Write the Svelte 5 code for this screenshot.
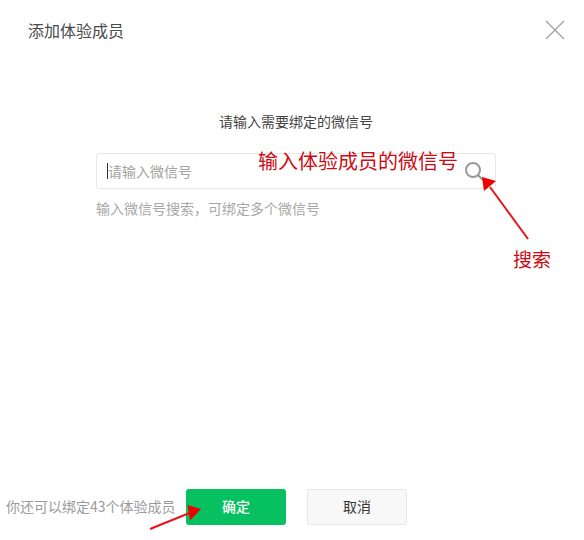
<script>
  const title = '添加体验成员';
</script>

<div class="dialog">
  <header class="head">
    <h2>{title}</h2>
    <button class="close" aria-label="关闭">
      <svg width="20" height="20" viewBox="0 0 20 20"><path d="M1 1L19 19M19 1L1 19" stroke="#a3a3a3" stroke-width="1.4" fill="none"/></svg>
    </button>
  </header>

  <main class="body">
    <p class="prompt">请输入需要绑定的微信号</p>
    <div class="field">
      <span class="caret"></span>
      <span class="placeholder">请输入微信号</span>
      <svg class="search" width="22" height="22" viewBox="0 0 22 22"><circle cx="9" cy="9" r="7" stroke="#9a9a9a" stroke-width="2" fill="none"/><path d="M14 14L19 19" stroke="#9a9a9a" stroke-width="2.2"/></svg>
    </div>
    <p class="hint">输入微信号搜索，可绑定多个微信号</p>
  </main>

  <footer class="foot">
    <span class="quota">你还可以绑定43个体验成员</span>
    <button class="btn primary">确定</button>
    <button class="btn ghost">取消</button>
  </footer>

  <span class="note note-input">输入体验成员的微信号</span>
  <span class="note note-search">搜索</span>
  <svg class="arrows" width="584" height="540" viewBox="0 0 584 540">
    <path d="M528 239L490 187" stroke="#e8131a" stroke-width="2" fill="none"/>
    <path d="M482 177L496 181L484 191Z" fill="#f00000"/>
    <path d="M150 529L192 512" stroke="#e8131a" stroke-width="2" fill="none"/>
    <path d="M201 509L187.500 505L190 520.500Z" fill="#f00000"/>
  </svg>
</div>

<style>
  :global(body) {
    margin: 0;
    background: #fff;
  }
  .dialog {
    position: relative;
    width: 584px;
    height: 540px;
    display: flex;
    flex-direction: column;
    overflow: hidden;
    font-family: "Noto Sans CJK SC", "Liberation Sans", sans-serif;
    color: #353535;
  }
  .head {
    display: flex;
    align-items: center;
    justify-content: space-between;
    height: 24px;
    padding: 18px 19px 0 28px;
  }
  h2 {
    margin: 0;
    font-size: 16px;
    font-weight: 400;
    line-height: 24px;
    color: #4a4a4a;
  }
  .close {
    display: flex;
    padding: 0;
    border: 0;
    background: none;
  }
  .body {
    flex: 1;
    display: flex;
    flex-direction: column;
    padding: 68px 88px 0 96px;
  }
  .prompt {
    margin: 0 0 21px;
    font-size: 14px;
    line-height: 22px;
    text-align: center;
    color: #444;
  }
  .field {
    box-sizing: border-box;
    display: flex;
    align-items: center;
    height: 36px;
    padding: 0 9px 0 10px;
    border: 1px solid #e7e7e7;
    border-radius: 3px;
  }
  .caret {
    width: 1px;
    height: 16px;
    background: #333;
  }
  .placeholder {
    flex: 1;
    font-size: 14px;
    color: #a3a3a3;
  }
  .search {
    margin-top: 2px;
  }
  .hint {
    margin: 8px 0 0;
    font-size: 14px;
    line-height: 22px;
    color: #a8a8a8;
  }
  .foot {
    display: flex;
    align-items: center;
    height: 36px;
    padding: 0 0 15px 6px;
  }
  .quota {
    width: 180px;
    padding-bottom: 2px;
    font-size: 14px;
    color: #9a9a9a;
    white-space: nowrap;
  }
  .btn {
    box-sizing: border-box;
    width: 100px;
    height: 36px;
    padding: 0 0 2px;
    border-radius: 3px;
    font: inherit;
    font-size: 14px;
  }
  .primary {
    border: 0;
    background: #07c160;
    color: #fff;
    font-weight: 500;
  }
  .ghost {
    margin-left: 21px;
    border: 1px solid #e6e6e6;
    background: #f8f8f8;
    color: #353535;
  }
  .note {
    position: absolute;
    font-size: 20px;
    line-height: 24px;
    color: #cc0b14;
    white-space: nowrap;
  }
  .note-input {
    left: 258px;
    top: 149px;
  }
  .note-search {
    left: 513px;
    top: 247px;
    font-size: 19px;
  }
  .arrows {
    position: absolute;
    inset: 0;
    pointer-events: none;
  }
</style>
